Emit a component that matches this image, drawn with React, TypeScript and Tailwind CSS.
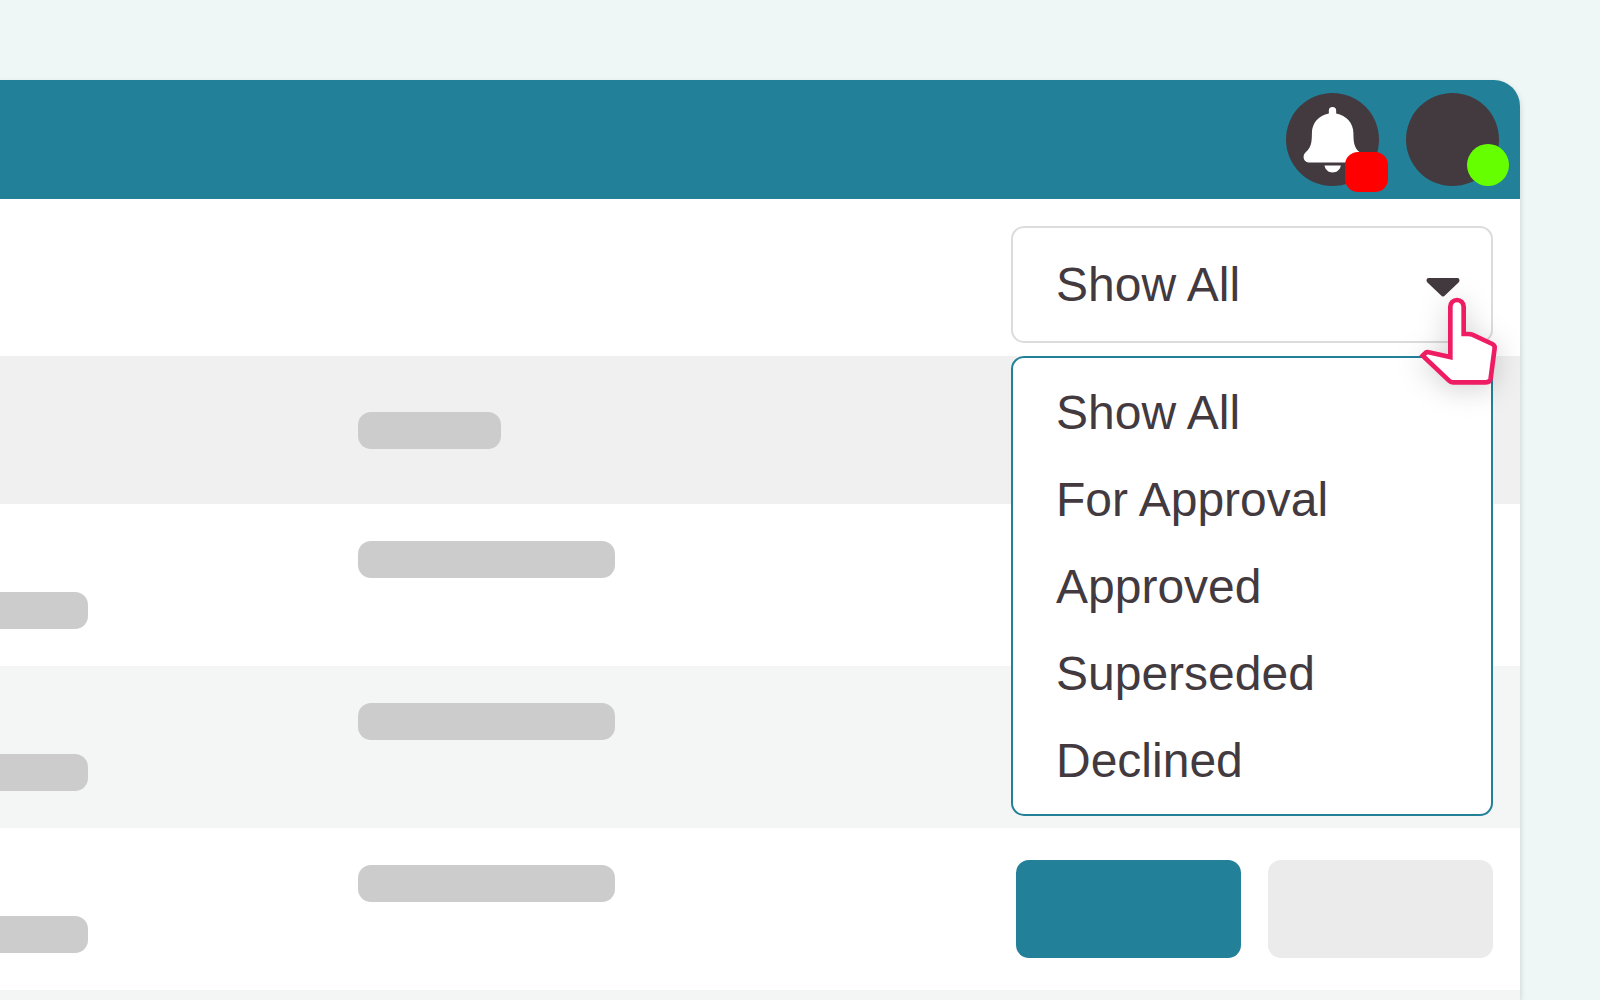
import { useState } from "react";

const OPTIONS = ["Show All", "For Approval", "Approved", "Superseded", "Declined"];

function Pill({ className }: { className: string }) {
  return <div className={`h-[37px] rounded-[13px] bg-[#cccccc] ${className}`} />;
}

function BellIcon() {
  return (
    <svg viewBox="78 69 280 280" className="h-full w-full" fill="#fff" aria-hidden="true">
      <path d="M207 131 V122 A11 11 0 0 1 229 122 V131 C260 136 281 161 281 190 C281 220 284 233 299 247 C304 252 306 256 306 262 A15 15 0 0 1 291 278 H146 A15 15 0 0 1 131 262 C131 256 133 252 138 247 C152 234 156 221 156 190 C156 161 176 136 207 131 Z" />
      <path d="M194 287 H243 C241 300 231 308 218 308 C206 308 196 300 194 287 Z" />
    </svg>
  );
}

function Caret() {
  return (
    <svg
      viewBox="109 52 101 58"
      className="pointer-events-none absolute top-[52px] right-[33px] h-[19px] w-[34px]"
      fill="#433a40"
      aria-hidden="true"
    >
      <path d="M115 52 H204 C210 52 212 61 207 66 L166 105 C162 110 157 110 153 105 L112 66 C107 61 109 52 115 52 Z" />
    </svg>
  );
}

function Pointer() {
  return (
    <svg
      viewBox="87 111 237 267"
      className="pointer-events-none absolute top-[71px] -right-[5px] z-20 h-[89px] w-[79px] overflow-visible drop-shadow-[0_4px_14px_rgba(0,0,0,0.18)]"
      aria-hidden="true"
    >
      <path
        d="M181 291 V140 A20 20 0 0 1 221 140 V222 H236 Q242 222 247 224 L307 252 Q315 256 314 264 L302 355 Q300 367 288 367 H189 Q182 367 177 362 L98 287 L104 281 Q109 275 116 277 Z"
        fill="#fff"
        stroke="#ee1d63"
        strokeWidth="14"
        strokeLinejoin="miter"
      />
    </svg>
  );
}

function StatusFilter() {
  const [value, setValue] = useState("Show All");
  return (
    <div className="relative w-[482px]">
      <select
        aria-label="Status"
        value={value}
        onChange={(e) => setValue(e.target.value)}
        className="block h-[117px] w-full appearance-none rounded-[13px] border-2 border-[#dcdcdc] bg-white px-[43px] text-[48px] text-[#433a40] outline-none"
      >
        {OPTIONS.map((o) => (
          <option key={o}>{o}</option>
        ))}
      </select>
      <Caret />
      <ul className="absolute top-[130px] left-0 z-10 w-full rounded-[13px] border-2 border-[#228099] bg-white pt-[11px] pb-[10px]">
        {OPTIONS.map((o) => (
          <li key={o}>
            <button
              type="button"
              onClick={() => setValue(o)}
              className="block w-full px-[43px] text-left text-[48px] leading-[87px] text-[#433a40]"
            >
              {o}
            </button>
          </li>
        ))}
      </ul>
      <Pointer />
    </div>
  );
}

function Row({ className, actions }: { className: string; actions?: boolean }) {
  return (
    <div className={`flex h-[162px] items-center pr-[27px] ${className}`}>
      <div className="w-[358px] shrink-0 pt-[51px]">
        <Pill className="w-[88px] rounded-l-none" />
      </div>
      <div className="flex-1 pb-[51px]">
        <Pill className="w-[257px]" />
      </div>
      {actions && (
        <div className="flex gap-[27px]">
          <button type="button" aria-label="Primary action" className="h-[98px] w-[225px] rounded-[13px] bg-[#228099]" />
          <button type="button" aria-label="Secondary action" className="h-[98px] w-[225px] rounded-[13px] bg-[#ebebeb]" />
        </div>
      )}
    </div>
  );
}

export default function App() {
  return (
    <div className="flex h-screen flex-col overflow-hidden bg-[#eef7f6] pt-20 pr-20 font-['Liberation_Sans',Arial,sans-serif]">
      <main className="flex flex-1 flex-col rounded-tr-[26px] bg-white shadow-[0_3px_6px_rgba(0,0,0,0.16)]">
        <header className="flex h-[119px] shrink-0 items-center justify-end gap-[27px] rounded-tr-[26px] bg-[#228099] pr-[21px]">
          <button type="button" aria-label="Notifications" className="relative h-[93px] w-[93px] rounded-full bg-[#433a40]">
            <BellIcon />
            <span className="absolute top-[59px] left-[59px] h-[40px] w-[43px] rounded-[13px] bg-[#ff0000]" />
          </button>
          <button type="button" aria-label="Account" className="relative h-[93px] w-[93px] rounded-full bg-[#433a40]">
            <span className="absolute top-[51px] left-[61px] h-[42px] w-[42px] rounded-full bg-[#66ff00]" />
          </button>
        </header>
        <div className="flex h-[157px] shrink-0 items-start justify-end pt-[27px] pr-[27px]">
          <StatusFilter />
        </div>
        <div className="flex h-[148px] shrink-0 items-center bg-[#f0f0f0] pl-[358px]">
          <Pill className="w-[143px]" />
        </div>
        <Row className="shrink-0 bg-white" />
        <Row className="shrink-0 bg-[#f4f6f5]" />
        <Row className="shrink-0 bg-white" actions />
        <div className="flex-1 bg-[#f4f6f5]" />
      </main>
    </div>
  );
}
